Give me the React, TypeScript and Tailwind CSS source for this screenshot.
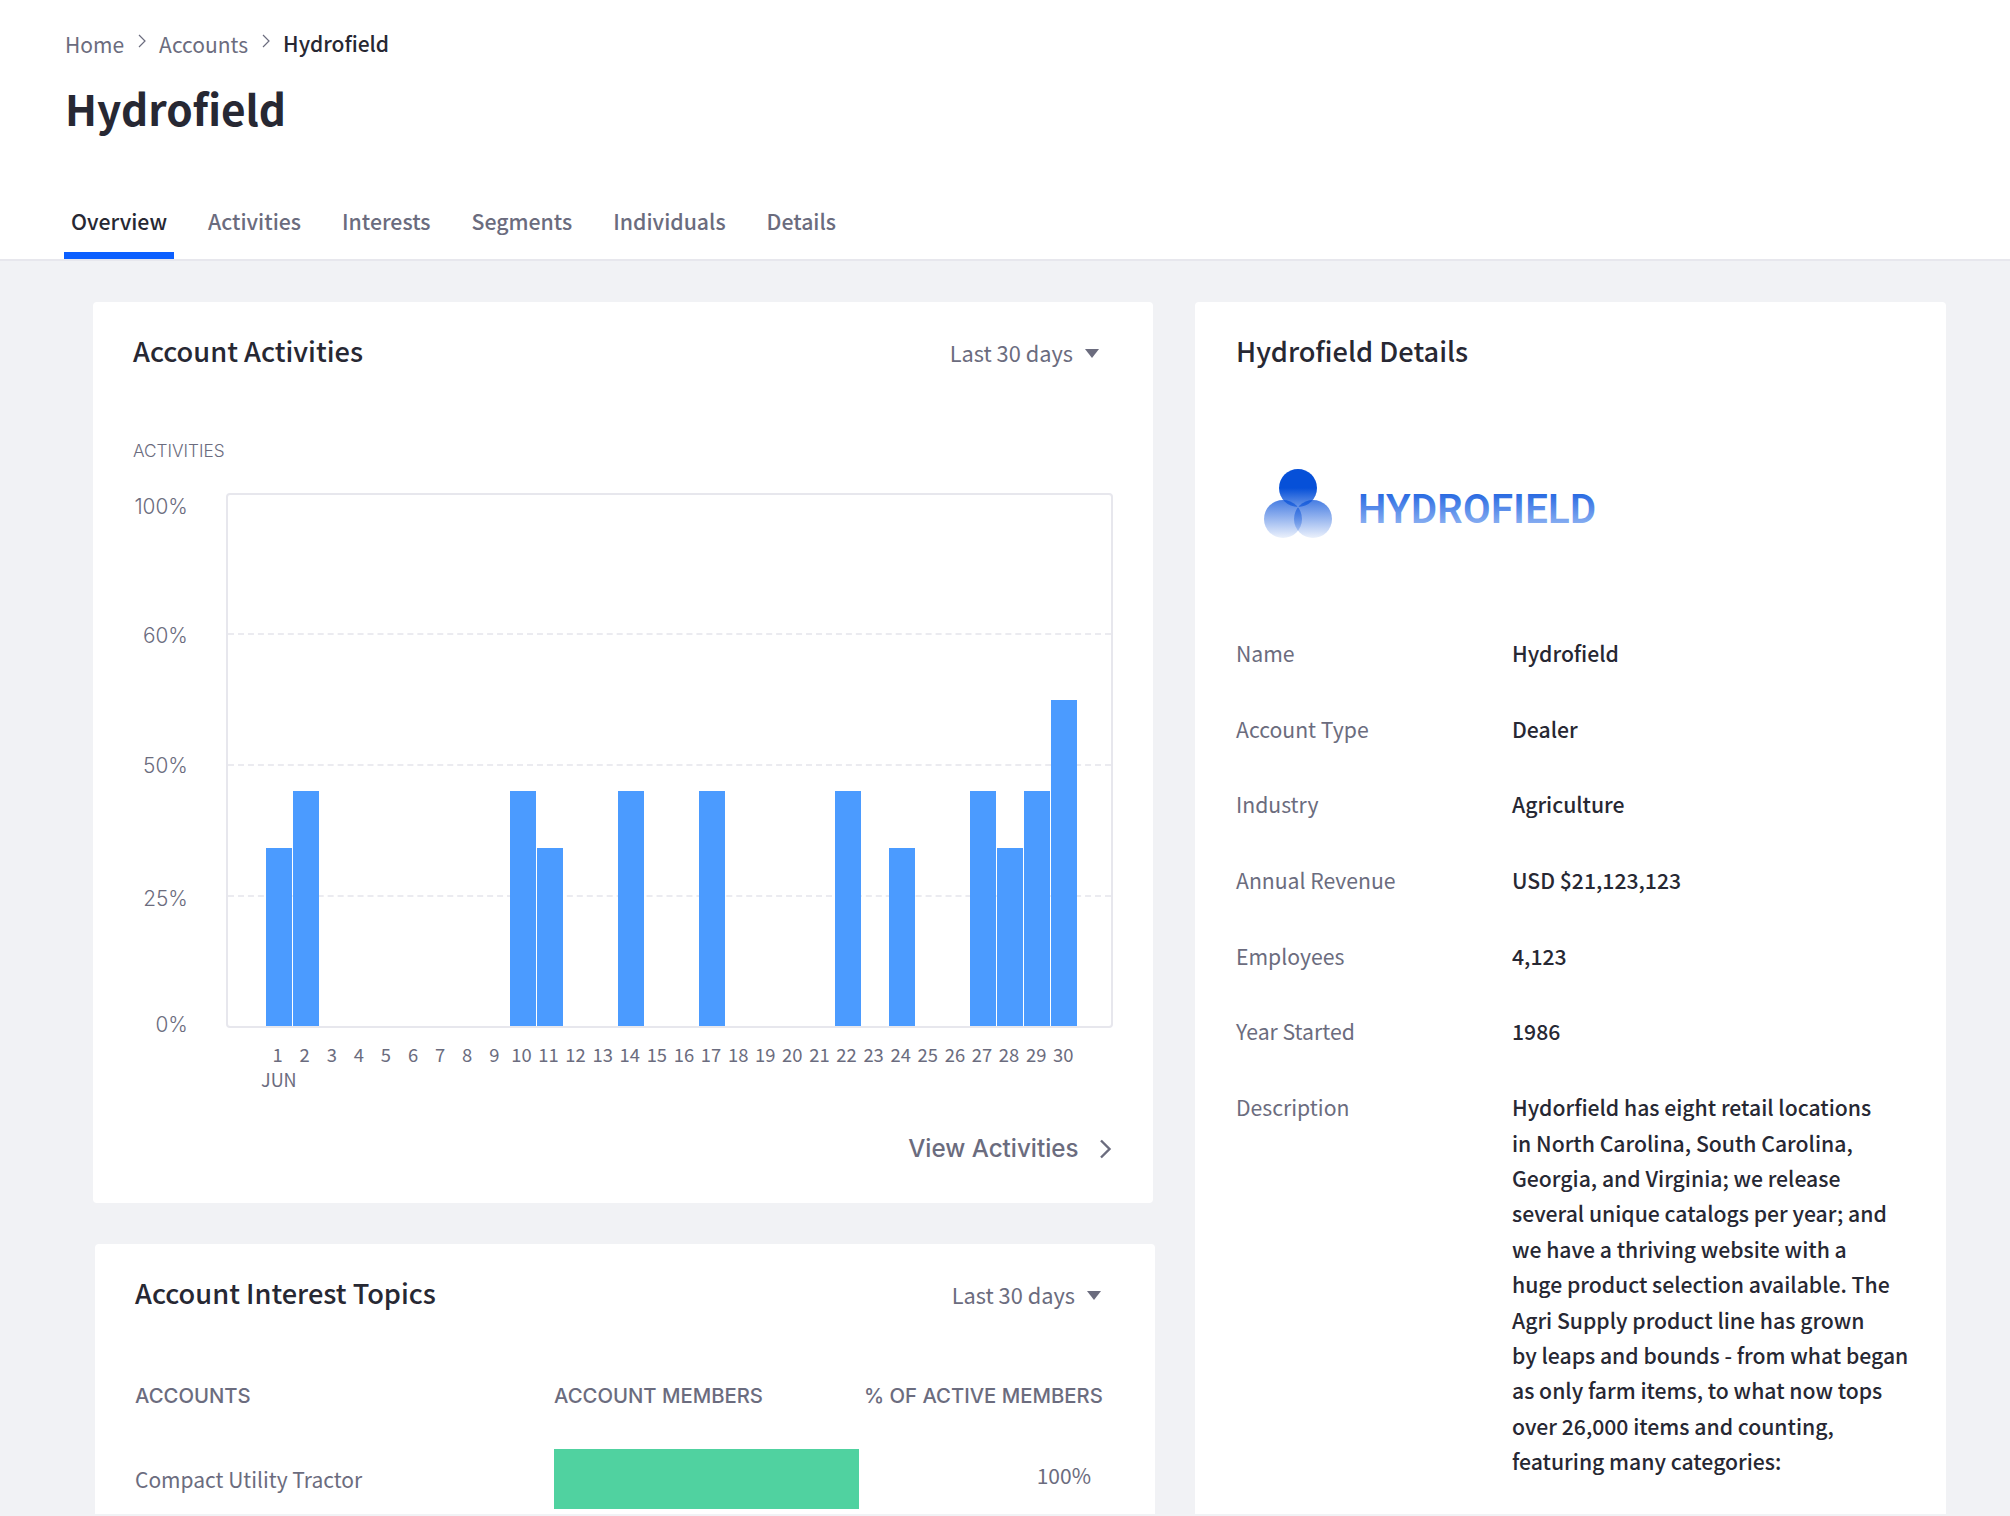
const FONT = "font-['Noto_Sans_CJK_SC','Source_Sans_Pro',sans-serif]";

const tabs = ['Overview', 'Activities', 'Interests', 'Segments', 'Individuals', 'Details'];

const bars: Record<number, number> = {
  1: 178, 2: 235, 10: 235, 11: 178, 14: 235, 17: 235, 22: 235, 24: 178, 27: 235, 28: 178, 29: 235, 30: 326,
};
const days = Array.from({ length: 30 }, (_, i) => i + 1);

const details = [
  ['Name', 'Hydrofield'],
  ['Account Type', 'Dealer'],
  ['Industry', 'Agriculture'],
  ['Annual Revenue', 'USD $21,123,123'],
  ['Employees', '4,123'],
  ['Year Started', '1986'],
];

const description = [
  'Hydorfield has eight retail locations',
  'in North Carolina, South Carolina,',
  'Georgia, and Virginia; we release',
  'several unique catalogs per year; and',
  'we have a thriving website with a',
  'huge product selection available. The',
  'Agri Supply product line has grown',
  'by leaps and bounds - from what began',
  'as only farm items, to what now tops',
  'over 26,000 items and counting,',
  'featuring many categories:',
];

function Crumb() {
  return (
    <svg width="10" height="16" viewBox="0 0 10 16" className="mx-[12.5px] -mt-[6px] shrink-0">
      <path d="M2 2l6 6-6 6" fill="none" stroke="#6b6c7e" strokeWidth="1.2" />
    </svg>
  );
}

function RangeSelect() {
  return (
    <div className="flex items-center gap-3 mt-[7px] text-[21.8px] text-[#6b6c7e]">
      <span>Last 30 days</span>
      <svg width="14" height="9" viewBox="0 0 14 9" className="mr-[3px]">
        <path d="M0 0h14L7 9z" fill="#6b6c7e" />
      </svg>
    </div>
  );
}

function Logo() {
  return (
    <svg width="380" height="90" viewBox="0 0 380 90">
      <defs>
        <linearGradient id="top" x1="0" y1="0" x2="0" y2="1">
          <stop offset="0.5" stopColor="#0650d8" />
          <stop offset="1" stopColor="#0650d8" stopOpacity="0.6" />
        </linearGradient>
        <linearGradient id="low" x1="0" y1="0" x2="0" y2="1">
          <stop offset="0" stopColor="#0a52d9" stopOpacity="0.75" />
          <stop offset="1" stopColor="#0a52d9" stopOpacity="0.08" />
        </linearGradient>
        <linearGradient id="word" x1="0" y1="0" x2="0" y2="1">
          <stop offset="0.1" stopColor="#1f63e0" />
          <stop offset="0.95" stopColor="#9dbdf5" />
        </linearGradient>
      </defs>
      <circle cx="33" cy="59" r="19" fill="url(#low)" />
      <circle cx="63" cy="59" r="19" fill="url(#low)" />
      <circle cx="48" cy="28" r="19" fill="url(#top)" />
      <text
        x="108"
        y="63"
        fill="url(#word)"
        textLength="238"
        lengthAdjust="spacing"
        fontFamily="Roboto, sans-serif"
        fontWeight="600"
        fontSize="40"
      >
        HYDROFIELD
      </text>
    </svg>
  );
}

function ActivityChart() {
  return (
    <div className="mt-[69px]">
      <div className="text-[17.2px] leading-[24px] font-light text-[#6b6c7e] font-['Inter',sans-serif]">ACTIVITIES</div>
      <div className="mt-[30px] flex">
        <div className="w-[93px] h-[535px] pt-[1px] pr-[38px] flex flex-col justify-between items-end text-[20.8px] leading-[24px] font-light text-[#6b6c7e] font-['Inter',sans-serif]">
          <span className="translate-y-[1px]">100%</span>
          <span className="translate-y-[1px]">60%</span>
          <span className="translate-y-[3px]">50%</span>
          <span className="mt-[3px] translate-y-[4px]">25%</span>
          <span className="-mb-[7px] translate-y-[2px]">0%</span>
        </div>
        <div className="relative w-[891px] h-[535px] border-2 border-[#e7e7ed] rounded-[4px]">
          <div className="absolute left-0 right-0 top-[138px] border-t-2 border-dashed border-[#ebebf0]" />
          <div className="absolute left-0 right-0 top-[269px] border-t-2 border-dashed border-[#ebebf0]" />
          <div className="absolute left-0 right-0 top-[400px] border-t-2 border-dashed border-[#ebebf0]" />
          <div className="absolute left-[38px] bottom-0 flex h-full items-end">
            {days.map((d) => (
              <div key={d} className="w-[27.1px] flex justify-start">
                {bars[d] && <div className="w-[26px] bg-[#4b9bff]" style={{ height: bars[d] }} />}
              </div>
            ))}
          </div>
        </div>
      </div>
      <div className="ml-[131px] mt-[14px] flex text-[18.4px] leading-[24px] text-[#6b6c7e]">
        {days.map((d) => (
          <div key={d} className="w-[27.1px] text-center">{d}</div>
        ))}
      </div>
      <div className="ml-[128px] mt-[2px] text-[18px] leading-[22px] text-[#6b6c7e]">JUN</div>
    </div>
  );
}

export default function App() {
  return (
    <div className={`${FONT} w-[2010px] h-[1516px] overflow-hidden flex flex-col bg-[#f1f2f5] text-[#272833]`}>
      <header className="bg-white border-b-2 border-[#e7e7ed] h-[261px] shrink-0 px-[65px] flex flex-col">
        <nav className="mt-[27px] flex items-center text-[21px] leading-[34px] text-[#6b6c7e]">
          <span>Home</span>
          <Crumb />
          <span>Accounts</span>
          <Crumb />
          <span className="font-medium text-[#272833] -mt-[3px]">Hydrofield</span>
        </nav>
        <h1 className="mt-[19px] text-[42.3px] leading-[56px] font-bold">Hydrofield</h1>
        <div className="mt-auto -ml-[1px] flex gap-[27px]">
          {tabs.map((t, i) => (
            <div
              key={t}
              className={`px-[7px] pb-[14px] text-[21.25px] leading-[34px] font-medium border-b-[7px] ${
                i === 0 ? 'border-[#0b5fff] text-[#272833]' : 'border-transparent text-[#6b6c7e]'
              }`}
            >
              {t}
            </div>
          ))}
        </div>
      </header>

      <main className="flex-1 min-h-0 pb-[2px] pl-[93px] pt-[41px] flex gap-[42px] items-stretch">
        <div className="w-[1060px] shrink-0 flex flex-col gap-[41px]">
          <section className="bg-white rounded-[4px] h-[901px] px-[40px] pt-[28px] shrink-0">
            <div className="flex items-center justify-between pr-[11px]">
              <h2 className="text-[27.2px] leading-[40px] font-medium">Account Activities</h2>
              <RangeSelect />
            </div>
            <ActivityChart />
            <div className="mt-[41px] flex items-center justify-end gap-[19px] text-[24.2px] leading-[36px] font-medium text-[#6b6c7e] font-['Inter',sans-serif]">
              <span>View Activities</span>
              <svg width="14" height="20" viewBox="0 0 14 20" className="mr-[1.5px]">
                <path d="M3 1.5l8.5 8.5L3 18.5" fill="none" stroke="#6b6c7e" strokeWidth="2.4" />
              </svg>
            </div>
          </section>

          <section className="bg-white rounded-t-[4px] ml-[2px] w-[1060px] flex-1 overflow-hidden px-[40px] pt-[28px]">
            <div className="flex items-center justify-between pr-[11px]">
              <h2 className="text-[27.2px] leading-[40px] font-medium">Account Interest Topics</h2>
              <RangeSelect />
            </div>
            <div className="mt-[70px] grid grid-cols-[419px_305px_1fr] text-[20.3px] leading-[28px] font-medium text-[#6b6c7e] font-['Inter',sans-serif]">
              <span>ACCOUNTS</span>
              <span>ACCOUNT MEMBERS</span>
              <span className="pl-[5px] whitespace-nowrap">% OF ACTIVE MEMBERS</span>
            </div>
            <div className="mt-[39px] grid grid-cols-[419px_305px_1fr] items-center text-[21px] text-[#6b6c7e]">
              <span className="pt-[2px]">Compact Utility Tractor</span>
              <div className="h-[60px] bg-[#50d2a0]" />
              <span className="text-right pr-[24px] -mt-[6px]">100%</span>
            </div>
          </section>
        </div>

        <aside className="w-[751px] shrink-0 bg-white rounded-t-[4px] px-[41px] pt-[28px] overflow-hidden">
          <h2 className="text-[27.2px] leading-[40px] font-medium">Hydrofield Details</h2>
          <div className="mt-[90px] -mb-[4px] ml-[14px]">
            <Logo />
          </div>
          <div className="mt-[89px] grid grid-cols-[276px_1fr] text-[21.2px] leading-[35.4px]">
            {details.map(([k, v]) => (
              <div key={k} className="contents">
                <div className="text-[#6b6c7e] h-[75.7px]">{k}</div>
                <div className="font-medium">{v}</div>
              </div>
            ))}
            <div className="text-[#6b6c7e]">Description</div>
            <div className="font-medium whitespace-nowrap">
              {description.map((l) => (
                <div key={l}>{l}</div>
              ))}
            </div>
          </div>
        </aside>
      </main>
    </div>
  );
}
